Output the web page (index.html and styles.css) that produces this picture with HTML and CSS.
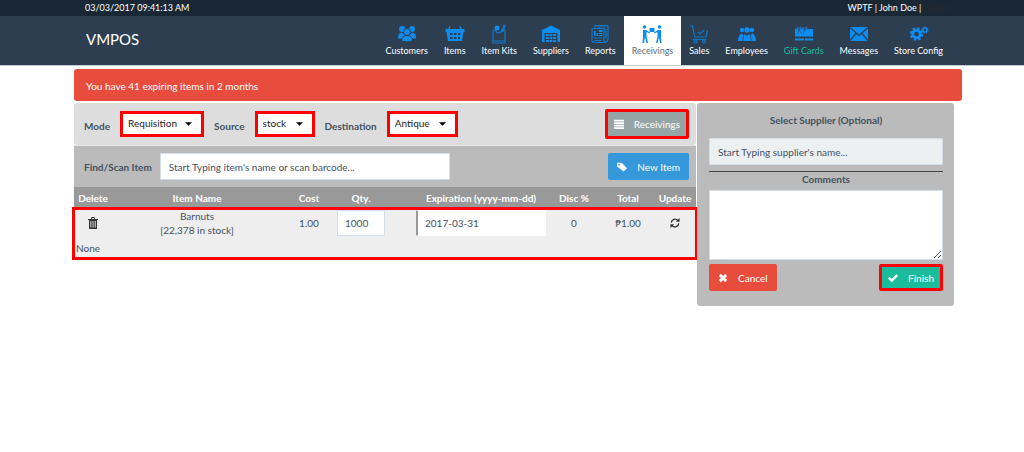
FILE: index.html
```html
<!DOCTYPE html>
<html lang="en">
<head>
<meta charset="utf-8">
<meta name="viewport" content="width=device-width, initial-scale=1">
<title>VMPOS - Receivings</title>
<link rel="stylesheet" href="styles.css">
</head>
<body>
<div class="topbar">
  <span>03/03/2017 09:41:13 AM</span>
  <span>WPTF | John Doe | <a class="logout" href="#">Logout</a></span>
</div>
<header class="header">
  <a class="brand" href="#">VMPOS</a>
  <nav class="nav">
    <a class="nav-item" href="#">
      <svg class="nav-icon" viewBox="0 0 20 20"><circle cx="5" cy="5" r="3"/><circle cx="15" cy="5" r="3"/><path d="M1 14q0-5 4-5.500l3 3v3H1zM19 14q0-5-4-5.500l-3 3v3h7z"/><g class="cut"><circle cx="10" cy="8" r="3.500"/><path d="M4.500 17q0-5.500 5.500-5.500t5.500 5.500q-5.500 2-11 0z"/></g></svg>
      <span>Customers</span></a>
    <a class="nav-item" href="#">
      <svg class="nav-icon" viewBox="0 0 20 20"><path fill-rule="evenodd" d="M.500 5h2.500l1.500-3 1 .500L4.500 5h11l-1-2.500 1-.500L17 5h2.500v3h-1L17 17H3L1.500 8h-1zM5 9v2h2.500V9zm4 0v2h2.500V9zm4 0v2h2.500V9zM5 13v2h2.500v-2zm4 0v2h2.500v-2zm4 0v2h2v-2z"/></svg>
      <span>Items</span></a>
    <a class="nav-item" href="#">
      <svg class="nav-icon" viewBox="0 0 20 20"><path class="line" d="M4 6v13h12V6M4 6h2M14 6h2M13 8l2-7 1 .500L14 8M4 17h12"/><circle cx="8" cy="4" r="2.500"/><path class="line" d="M6 6l2 3 4-1 1-3"/></svg>
      <span>Item Kits</span></a>
    <a class="nav-item" href="#">
      <svg class="nav-icon" viewBox="0 0 20 20"><path fill-rule="evenodd" d="M1 6l9-4.500L19 6v12h-2.500V9h-13v9H1z"/><path d="M5 10h2.800v2H5zM8.600 10h2.800v2H8.600zM12.200 10H15v2h-2.800zM5 13h2.800v2H5zM8.600 13h2.800v2H8.600zM12.200 13H15v2h-2.800zM5 16h2.800v2H5zM8.600 16h2.800v2H8.600zM12.200 16H15v2h-2.800z"/></svg>
      <span>Suppliers</span></a>
    <a class="nav-item" href="#">
      <svg class="nav-icon" viewBox="0 0 20 20"><path class="line" d="M5 4V1.500h13V15q0 3-3 3M2 4.500h12V16q0 3 2 2.500H4q-2 0-2-2zM4 14h8M4 16.500h8M7 3h9M16 5v9"/><path d="M4 7h1.500v5H4zM6.500 9H8v3H6.500zM9 6h3.500v2H9zM9 9h3.500v1H9zM9 11h3.500v1H9z"/></svg>
      <span>Reports</span></a>
    <a class="nav-item active" href="#">
      <svg class="nav-icon" viewBox="0 0 20 20"><circle cx="2.500" cy="3" r="1.800"/><circle cx="17.500" cy="3" r="1.800"/><path d="M1 6h3l4 2.500-.500 1L4.500 8v4L6 19H4.500L3 13l-1 6H.500L1 12zM19 6h-3l-4 2.500.500 1L15.500 8v4L14 19h1.500l1.500-6 1 6h1.500L19 12zM7.500 4h5v4h-5z"/></svg>
      <span>Receivings</span></a>
    <a class="nav-item" href="#">
      <svg class="nav-icon" viewBox="0 0 20 20"><path class="line" d="M1 2h2.500l2.200 11H17l1.500-7M9 8l2 2 4-4M4 15.500h13.500"/><circle class="line" cx="6.500" cy="17.500" r="1.500"/><circle class="line" cx="15" cy="17.500" r="1.500"/></svg>
      <span>Sales</span></a>
    <a class="nav-item" href="#">
      <svg class="nav-icon" viewBox="0 0 20 20"><circle cx="5" cy="6" r="2.200"/><circle cx="15" cy="6" r="2.200"/><circle cx="10" cy="6" r="2.700"/><path d="M1 17q0-6 3.500-7.500L6.500 11q-1 2-1 6zM19 17q0-6-3.500-7.500L13.500 11q1 2 1 6zM6.200 17q0-6 2-7L10 12l1.800-2q2 1 2 7z"/></svg>
      <span>Employees</span></a>
    <a class="nav-item gift" href="#">
      <svg class="nav-icon" viewBox="0 0 20 20"><path d="M1 5h18v7.500H1zM1 14.500h9v2H1zM11 14.500h8v2h-8z"/><path class="bow" d="M5 6Q1 5 2.500 3.500T5 6Q5 2 7 3T5 6l-1 4M5 6l3 4M11 6Q7 5 8.500 3.500T11 6q0-4 2-3t-2 3l-2 4"/></svg>
      <span>Gift Cards</span></a>
    <a class="nav-item" href="#">
      <svg class="nav-icon" viewBox="0 0 20 20"><rect x="1" y="3" width="18" height="14" rx="1"/><path class="cutline" d="M1 3.500l9 8 9-8M1 16.500l6-7M19 16.500l-6-7"/></svg>
      <span>Messages</span></a>
    <a class="nav-item" href="#">
      <svg class="nav-icon" viewBox="0 0 20 20"><circle class="ring" cx="7.500" cy="10" r="3.800"/><circle class="teeth" cx="7.500" cy="10" r="5.800"/><circle class="ring small" cx="16" cy="6" r="2"/><circle class="teeth tiny" cx="16" cy="6" r="3"/></svg>
      <span>Store Config</span></a>
  </nav>
</header>

<main class="page">
  <div class="alert" role="alert">You have 41 expiring items in 2 months</div>
  <div class="columns">
    <section class="register">
      <form class="bar mode-bar">
        <label for="mode">Mode</label>
        <span class="pick marked"><select id="mode" class="w-mode"><option>Requisition</option></select><svg class="caret" viewBox="0 0 8 4"><path d="M0 0h8L4 4z"/></svg></span>
        <label for="source">Source</label>
        <span class="pick marked"><select id="source" class="w-source"><option>stock</option></select><svg class="caret" viewBox="0 0 8 4"><path d="M0 0h8L4 4z"/></svg></span>
        <label for="dest">Destination</label>
        <span class="pick marked"><select id="dest" class="w-dest"><option>Antique</option></select><svg class="caret" viewBox="0 0 8 4"><path d="M0 0h8L4 4z"/></svg></span>
        <button type="button" class="btn gray marked push"><svg class="icon" viewBox="0 0 12 12"><path d="M0 1h12v2H0zM0 4h12v2H0zM0 7h12v2H0zM0 10h12v2H0z"/></svg>Receivings</button>
      </form>
      <form class="bar find-bar">
        <label for="item">Find/Scan Item</label>
        <input id="item" class="field search" type="text" placeholder="Start Typing item's name or scan barcode...">
        <button type="button" class="btn blue push"><svg class="icon" viewBox="0 0 12 12"><path fill-rule="evenodd" d="M0 1h5.500L12 7.500 8 11.500 0 5.500zM2.500 2.200a1 1 0 1 0 .010 0z"/></svg>New Item</button>
      </form>
      <table class="cart">
        <colgroup><col class="c-del"><col><col class="c-cost"><col class="c-qty"><col class="c-exp"><col class="c-disc"><col class="c-total"><col class="c-upd"></colgroup>
        <thead><tr><th>Delete</th><th>Item Name</th><th>Cost</th><th>Qty.</th><th class="exp">Expiration (yyyy-mm-dd)</th><th>Disc %</th><th>Total</th><th>Update</th></tr></thead>
        <tbody>
          <tr>
            <td><button class="icon-btn" type="button" aria-label="Delete"><svg class="icon dark" viewBox="0 0 12 12"><path fill-rule="evenodd" d="M1 2h3l.500-2h3L8 2h3v1h-1v9H2V3H1zM5 2h2l-.200-1H5.200zM3.400 4v6.500h.900V4zm2.200 0v6.500h.900V4zm2.200 0v6.500h.900V4z"/></svg></button></td>
            <td>Barnuts<br>[22,378 in stock]</td>
            <td>1.00</td>
            <td><input class="field cell" type="text" value="1000" aria-label="Quantity"></td>
            <td class="exp"><input class="field cell date" type="text" value="2017-03-31" aria-label="Expiration"></td>
            <td>0</td>
            <td>₱1.00</td>
            <td><button class="icon-btn" type="button" aria-label="Update"><svg class="icon" viewBox="0 0 12 12"><path class="arc" d="M1.500 5.500A4.500 4.500 0 0 1 9.500 3M10.500 6.500A4.500 4.500 0 0 1 2.500 9"/><path d="M11.500 0v4.500H7zM.500 12V7.500H5z"/></svg></button></td>
          </tr>
          <tr><td class="note" colspan="8">None</td></tr>
        </tbody>
      </table>
    </section>

    <aside class="side">
      <label class="side-title" for="supplier">Select Supplier (Optional)</label>
      <input id="supplier" class="field supplier" type="text" placeholder="Start Typing supplier's name...">
      <label class="comments-title" for="comments">Comments</label>
      <textarea id="comments" class="field comments"></textarea>
      <div class="actions">
        <button type="button" class="btn red"><svg class="icon" viewBox="0 0 12 12"><path d="M3.500 1L6 3.500 8.500 1 11 3.500 8.500 6 11 8.500 8.500 11 6 8.500 3.500 11 1 8.500 3.500 6 1 3.500z"/></svg>Cancel</button>
        <button type="button" class="btn green marked"><svg class="icon" viewBox="0 0 12 12"><path d="M0 6.500L2 4.500l2.500 2.500L10 1.500l2 2L4.500 11z"/></svg>Finish</button>
      </div>
    </aside>
  </div>
</main>
</body>
</html>
```
FILE: styles.css
```css
* { box-sizing: border-box; }
body {
  margin: 0;
  background: #fff;
  color: #2c3e50;
  font: 10px/14px Lato, "Liberation Sans", sans-serif;
}
a { color: inherit; text-decoration: none; }
button, input, select, textarea { font: inherit; color: inherit; margin: 0; }

.topbar {
  display: flex;
  justify-content: space-between;
  padding: 0 73px 0 85px;
  background: #1a2835;
  color: #fff;
  font-size: 9px;
  line-height: 16px;
}
.logout { color: #26292d; }

.header {
  display: flex;
  justify-content: space-between;
  padding: 0 73px 0 86px;
  background: #2d3e50;
  color: #fff;
  border-bottom: 1px solid #c3ccd5;
}
.brand { font-size: 15px; line-height: 46px; }
.nav { display: flex; }
.nav-item {
  display: flex;
  flex-direction: column;
  align-items: center;
  padding: 8px 8px 7px;
  font-size: 9px;
}
.nav-item.active { background: #fff; color: #5d6d7e; }
.nav-item.gift { color: #1abc9c; }
.nav-icon { width: 20px; height: 20px; fill: #0d8df0; }
.nav-icon .cut { stroke: #2d3e50; stroke-width: 1; }
.nav-icon .line { fill: none; stroke: #0f79c8; stroke-width: 1.2; }
.nav-icon .cutline { fill: none; stroke: #2d3e50; stroke-width: 1.2; }
.nav-icon .bow { fill: #0d8df0; stroke: #1f5f98; stroke-width: 1; }
.nav-icon .ring { fill: none; stroke: #0d8df0; stroke-width: 3; }
.nav-icon .ring.small { stroke-width: 1.5; }
.nav-icon .teeth { fill: none; stroke: #0d8df0; stroke-width: 2; stroke-dasharray: 2.4 2.155; }
.nav-icon .teeth.tiny { stroke-width: 1; stroke-dasharray: 1.2 1.156; }

.page { padding: 3px 62px 0 74px; }
.alert {
  padding: 10px 12px 8px;
  margin-bottom: 2px;
  border-radius: 3px;
  background: #e74c3c;
  color: #fff;
}
.columns { display: flex; align-items: flex-start; gap: 1px; padding-right: 8px; }
.register { flex: 1; min-width: 0; }

.bar { display: flex; align-items: center; padding: 0 7px 0 10px; }
.bar label { font-weight: 700; color: #44525f; }
.mode-bar { height: 42px; background: #ddd; border-radius: 3px; }
.find-bar { height: 42px; background: #bbb; border-top: 1px solid #e4e4e4; }
.push { margin-left: auto; }
.mode-bar label { margin: 3px 10px 0 0; }

.marked { border: 3px solid #f00; }
.pick { position: relative; display: flex; margin-right: 10px; background: #fff; }
.pick select {
  appearance: none;
  height: 20px;
  padding: 0 0 2px 5px;
  border: 0;
  background: #fff;
  color: #222;
}
.caret { position: absolute; right: 9px; top: 8px; width: 7px; height: 4px; fill: #000; pointer-events: none; }
.w-mode { width: 78px; }
.w-source { width: 54px; }
.w-dest { width: 65px; }

.btn {
  display: inline-flex;
  align-items: center;
  gap: 10px;
  height: 27px;
  padding: 0 9px;
  border: 0;
  border-radius: 2px;
  color: #fff;
}
.btn.marked { border: 3px solid #f00; padding: 0 6px; }
.icon { display: block; width: 10px; height: 10px; fill: currentColor; }
.gray { background: #95a5a6; }
.gray.marked { height: 30px; }
.blue { background: #3498db; }
.red { background: #e74c3c; }
.green { background: #1abc9c; }

.field { border: 1px solid #d5dde6; border-radius: 1px; background: #fff; outline: 0; }
.field::placeholder { color: #44525f; opacity: 1; }
.search { width: 290px; height: 27px; margin-left: 8px; padding: 0 8px; }

.cart {
  width: 100%;
  table-layout: fixed;
  border-collapse: collapse;
  background: #eee;
  text-align: center;
  color: #44525f;
}
.cart th, .cart td { padding: 0; }
.cart th { height: 22px; background: #999; color: #fff; font-weight: 700; white-space: nowrap; }
.cart tbody { outline: 3px solid #f00; outline-offset: -1px; }
.cart td { height: 28px; }
.cart .exp { padding-left: 30px; }
.cart .note { height: 21px; padding-left: 2px; text-align: left; }
.c-del { width: 38px; }
.c-cost { width: 54px; }
.c-qty { width: 50px; }
.c-exp { width: 160px; }
.c-disc { width: 56px; }
.c-total { width: 52px; }
.c-upd { width: 42px; }
.cell { display: block; width: 48px; height: 26px; margin: 0 auto; padding: 0 7px; }
.cell.date { width: 100%; border-color: #fff; border-left: 2px solid #999; }
.icon-btn { display: block; margin: 0 auto; padding: 0; border: 0; background: none; color: #333; }
.icon.dark { width: 12px; height: 12px; }
.icon .arc { fill: none; stroke: #333; stroke-width: 1.6; }

.side {
  display: flex;
  flex-direction: column;
  width: 257px;
  padding: 10px 11px 15px 12px;
  background: #bbb;
  border-radius: 3px;
  text-align: center;
}
.side label { font-weight: 700; color: #44525f; }
.supplier { height: 27px; margin: 11px 0 6px; padding: 0 8px; background: #ecf0f1; }
.comments-title { border-top: 1px solid #444; }
.comments { height: 70px; margin: 4px 0; resize: vertical; }
.actions { display: flex; justify-content: space-between; }
```
